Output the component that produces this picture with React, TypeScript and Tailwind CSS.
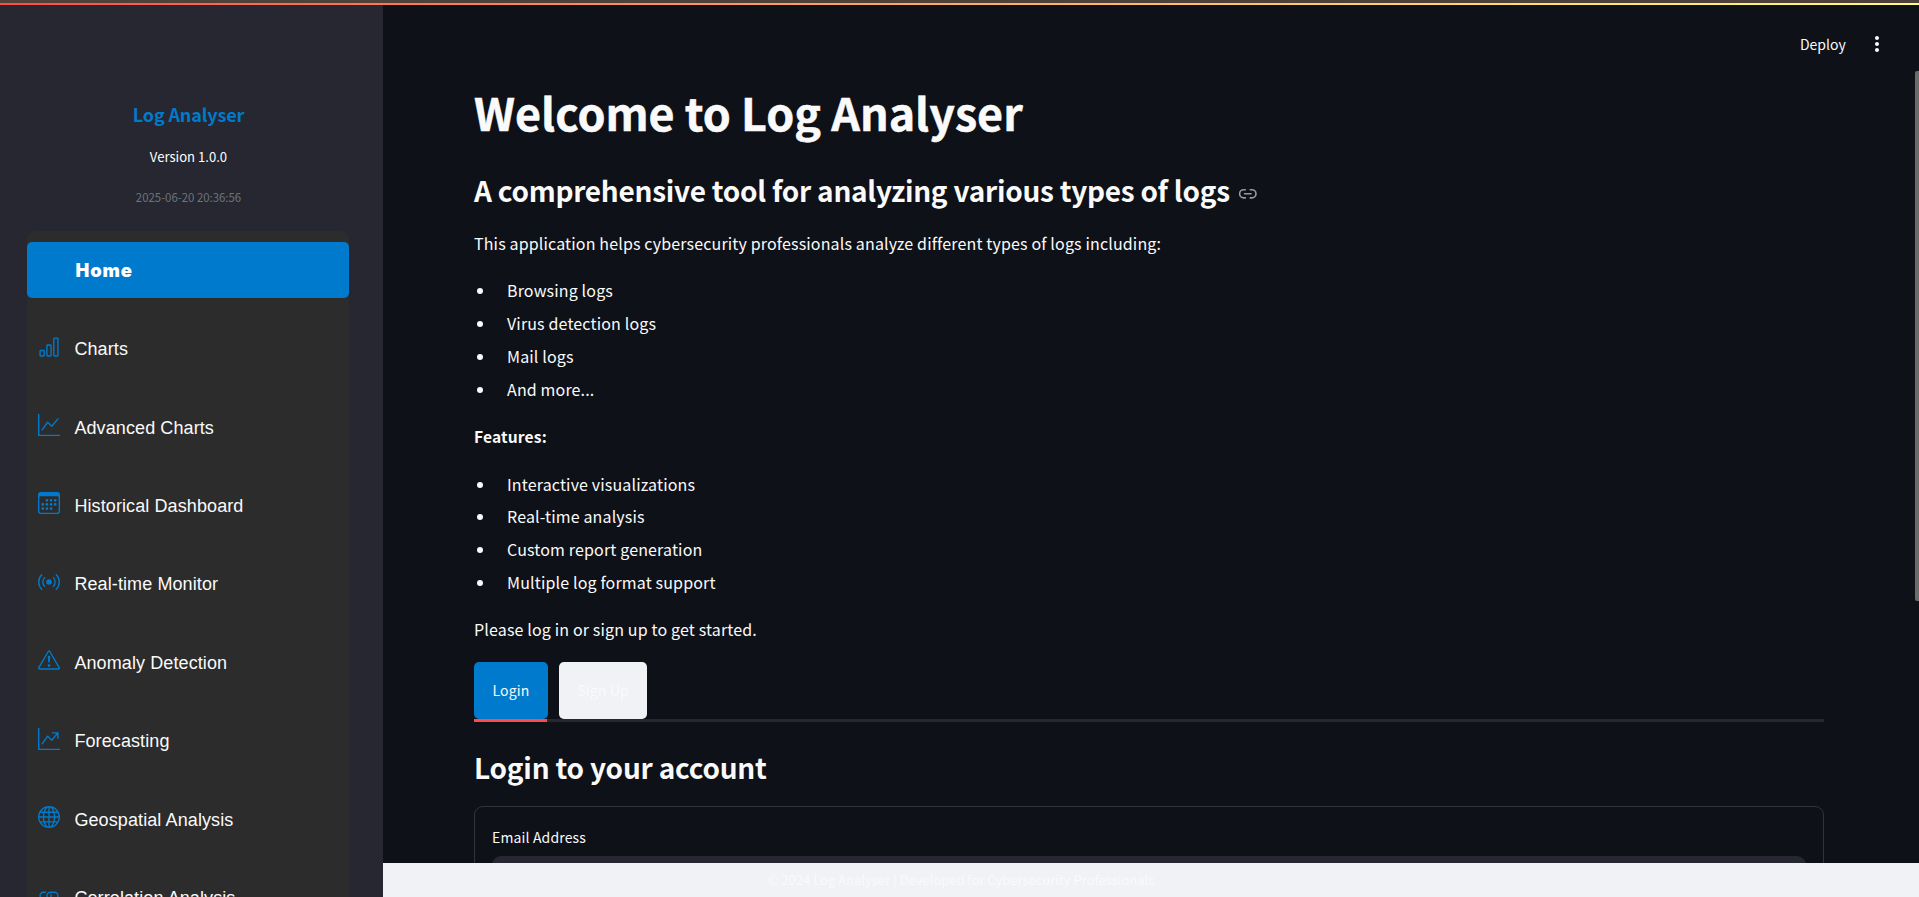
import React from 'react';
import { BsBarChart, BsGraphUp, BsCalendar3, BsBroadcast, BsExclamationTriangle, BsGraphUpArrow, BsGlobe, BsLink } from 'react-icons/bs';
import { MdMoreVert } from 'react-icons/md';
import { Link2 } from 'lucide-react';

const navItems = [
  { label: 'Charts', Icon: BsBarChart },
  { label: 'Advanced Charts', Icon: BsGraphUp },
  { label: 'Historical Dashboard', Icon: BsCalendar3 },
  { label: 'Real-time Monitor', Icon: BsBroadcast },
  { label: 'Anomaly Detection', Icon: BsExclamationTriangle },
  { label: 'Forecasting', Icon: BsGraphUpArrow },
  { label: 'Geospatial Analysis', Icon: BsGlobe },
  { label: 'Correlation Analysis', Icon: BsLink },
];

function BulletList({ items }: { items: string[] }) {
  return (
    <ul className="flex flex-col">
      {items.map((item) => (
        <li key={item} className="flex h-[32.9px] items-center">
          <span className="ml-[3px] mr-[24px] size-[6px] rounded-full bg-[#fafafa]" />
          <span className="pb-[2px]">{item}</span>
        </li>
      ))}
    </ul>
  );
}

export default function App() {
  return (
    <div className="flex h-[897px] w-full flex-col overflow-hidden bg-[#0e1117] font-['Noto_Sans_CJK_SC',sans-serif] text-[16px] tracking-[0.15px] text-[#fafafa]">
      <div className="h-[3px] shrink-0 bg-[#4d4139]" />
      <div className="h-[2px] shrink-0 bg-linear-to-r from-[#ff4b4b] to-[#fffd80]" />
      <div className="flex min-h-0 flex-1">
        <aside className="flex w-[383px] shrink-0 flex-col items-center overflow-hidden bg-[#262730] pr-[7px]">
          <h3 className="mt-[92px] flex h-[36px] shrink-0 items-center pb-[2px] pl-[1px] text-[18px] font-bold tracking-[-0.15px] whitespace-nowrap text-[#007acc]">Log Analyser</h3>
          <p className="mt-[8px] flex h-[32px] shrink-0 items-center pl-[1px] text-[13.1px] tracking-normal text-white">Version 1.0.0</p>
          <p className="mt-[10px] flex h-[32px] shrink-0 items-center pb-[2px] pl-[1px] text-[11.4px] tracking-normal text-[#6c757d]">2025-06-20 20:36:56</p>
          <nav className="mt-[16px] flex w-[322px] shrink-0 flex-col rounded-t-[9px] bg-[#2c2c2c] pt-[11px] font-['Liberation_Sans',sans-serif] text-[18px] tracking-[0.1px]">
            <div className="mb-[12px] flex h-[56px] items-center rounded-[5px] bg-[#007acc] pt-[2px] pl-[48.5px] font-['Inter',sans-serif] text-[18.4px] font-black tracking-[0.9px] text-white">Home</div>
            {navItems.map(({ label, Icon }) => (
              <div key={label} className="flex h-[78.4px] shrink-0 items-center gap-[14.4px] pl-[11px] text-[#fafafa]">
                <Icon className="mb-[5px] size-[22px] text-[#007acc]" />
                <span className="pt-px">{label}</span>
              </div>
            ))}
          </nav>
        </aside>
        <div className="flex min-w-0 flex-1 flex-col">
          <div className="flex min-h-0 flex-1">
            <main className="flex min-w-0 flex-1 flex-col overflow-hidden pl-[91px]">
              <header className="flex h-[75px] shrink-0 items-center justify-end gap-[19.6px] pt-[3px] pr-[25.7px]">
                <span className="text-[14px] tracking-normal">Deploy</span>
                <MdMoreVert className="size-[24px]" />
              </header>
              <h1 className="flex h-[60px] shrink-0 items-center pt-[4px] text-[44.8px] font-bold tracking-normal whitespace-nowrap [-webkit-text-stroke:0.5px_#fafafa]">Welcome to Log Analyser</h1>
              <h2 className="mt-[21px] flex h-[60px] shrink-0 items-center gap-[8px] pb-[2px] text-[28px] font-bold tracking-[-0.26px] whitespace-nowrap">
                A comprehensive tool for analyzing various types of logs
                <Link2 className="mt-[7px] size-[19.6px] text-[#9a9a9c]" />
              </h2>
              <p className="mt-[7px] flex h-[32px] shrink-0 items-center pb-[2px]">This application helps cybersecurity professionals analyze different types of logs including:</p>
              <div className="mt-[15px] flex shrink-0 flex-col gap-[14.8px]">
                <BulletList items={['Browsing logs', 'Virus detection logs', 'Mail logs', 'And more...']} />
                <p className="flex h-[32px] items-center pb-[2px] text-[15.6px] font-bold">Features:</p>
                <BulletList items={['Interactive visualizations', 'Real-time analysis', 'Custom report generation', 'Multiple log format support']} />
                <p className="flex h-[32px] items-center pb-[3px]">Please log in or sign up to get started.</p>
              </div>
              <div className="mt-[15.4px] mr-[91px] flex shrink-0 flex-col">
                <div className="flex gap-[11px] text-[14px]">
                  <button className="h-[57px] w-[74px] rounded-[5px] bg-[#007acc]">Login</button>
                  <button className="h-[57px] w-[88px] rounded-[5px] bg-[#f0f2f6]">Sign Up</button>
                </div>
                <div className="h-[3px] bg-[#262730]"><div className="h-[3px] w-[73px] bg-[#ff4b4b]" /></div>
              </div>
              <h2 className="mt-[22px] flex h-[46px] shrink-0 items-center text-[28px] font-bold tracking-[-0.22px]">Login to your account</h2>
              <div className="mt-[16px] mr-[91px] h-[200px] shrink-0 rounded-t-[9px] border border-[#31333b] px-[17px] pt-[17px]">
                <p className="flex h-[26px] items-center pt-[2px] text-[14px]">Email Address</p>
                <div className="mt-[6px] h-[44px] rounded-[9px] bg-[#262730]" />
              </div>
            </main>
            <div className="w-[4px] shrink-0 pt-[66px]"><div className="h-[530px] rounded-l-[2px] bg-[#6b6b6b]" /></div>
          </div>
          <footer className="flex h-[34px] shrink-0 items-center justify-center bg-[#f0f2f6] pr-[380px] text-[13px] tracking-normal text-[#fafafa]">© 2024 Log Analyser | Developed for Cybersecurity Professionals</footer>
        </div>
      </div>
    </div>
  );
}
